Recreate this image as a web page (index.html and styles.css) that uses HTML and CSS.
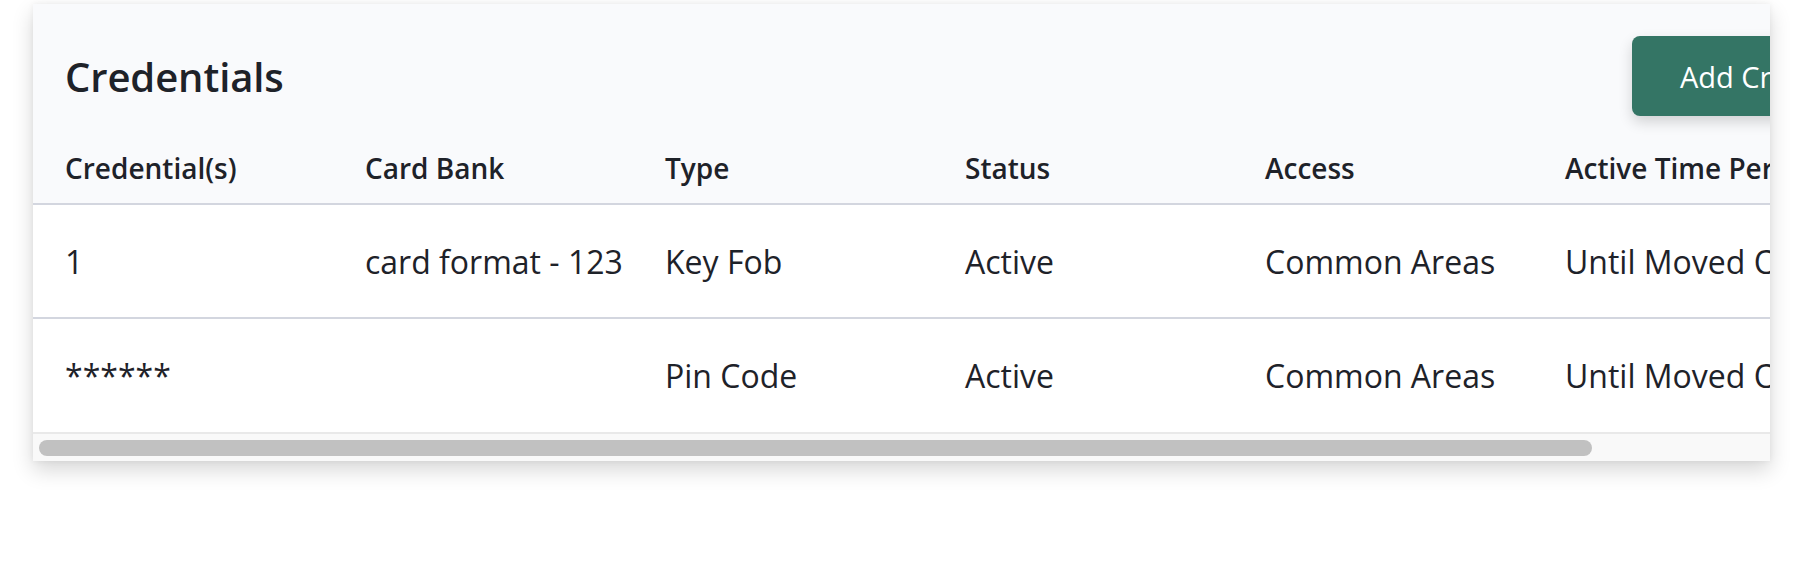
FILE: index.html
```html
<!DOCTYPE html>
<html lang="en">
<head>
<meta charset="utf-8">
<title>Credentials</title>
<link rel="stylesheet" href="styles.css">
</head>
<body>
<div class="card">
  <div class="viewport">
    <div class="content">
      <div class="top-bar">
        <h2 class="title">Credentials</h2>
        <button class="add-btn">Add Credential</button>
      </div>
      <table class="grid">
        <thead>
          <tr>
            <th>Credential(s)</th>
            <th>Card Bank</th>
            <th>Type</th>
            <th>Status</th>
            <th>Access</th>
            <th>Active Time Period</th>
          </tr>
        </thead>
        <tbody>
          <tr class="row-first">
            <td>1</td>
            <td>card format - 123</td>
            <td>Key Fob</td>
            <td>Active</td>
            <td>Common Areas</td>
            <td>Until Moved Out</td>
          </tr>
          <tr>
            <td>******</td>
            <td></td>
            <td>Pin Code</td>
            <td>Active</td>
            <td>Common Areas</td>
            <td>Until Moved Out</td>
          </tr>
        </tbody>
      </table>
    </div>
  </div>
  <div class="hscroll">
    <div class="hscroll-thumb"></div>
  </div>
</div>
</body>
</html>
```
FILE: styles.css
```css
* { box-sizing: border-box; }

html, body {
  margin: 0;
  padding: 0;
  background: #ffffff;
}

body {
  min-height: 100vh;
  padding: 4px 0 60px 33px;
  font-family: "Open Sans", "Noto Sans", "Liberation Sans", sans-serif;
  color: #1e2229;
}

.card {
  width: 1737px;
  height: 457px;
  background: #ffffff;
  box-shadow: 0 9px 20px rgba(0, 0, 0, 0.16), 0 0 6px rgba(0, 0, 0, 0.06);
  overflow: hidden;
  display: flex;
  flex-direction: column;
}

.viewport {
  flex: 1;
  overflow: hidden;
}

.content {
  width: 1931px;
}

.top-bar {
  height: 130px;
  padding: 14px 32px 0 32px;
  display: flex;
  align-items: center;
  justify-content: space-between;
  background: #f9fafc;
}

.title {
  margin: 0;
  font-size: 40px;
  font-weight: 600;
  font-stretch: 92%;
  letter-spacing: -0.1px;
  color: #1e2229;
}

.add-btn {
  width: 300px;
  height: 80px;
  padding: 0 0 0 48px;
  border: 0;
  border-radius: 8px;
  background: #347565;
  color: #ffffff;
  text-align: left;
  font-family: "Open Sans", "Noto Sans", sans-serif;
  font-size: 29px;
  font-weight: 500;
  font-stretch: 92%;
  box-shadow: 0 6px 14px rgba(0, 0, 0, 0.16);
}

.grid {
  border-collapse: collapse;
  table-layout: fixed;
  width: 1931px;
}

.grid th,
.grid td {
  width: 300px;
  padding: 0 0 0 32px;
  text-align: left;
  vertical-align: middle;
  white-space: nowrap;
  font-stretch: 92%;
}

.grid th:last-child,
.grid td:last-child {
  width: 431px;
}

.grid thead tr {
  height: 70px;
  background: #f9fafc;
  border-bottom: 2px solid #d3d6df;
}

.grid th {
  font-size: 28px;
  font-weight: 600;
  padding-bottom: 2px;
  color: #1e2229;
}

.grid tbody tr {
  height: 114px;
}

.grid tbody tr.row-first {
  border-bottom: 2px solid #d3d6df;
}

.grid td {
  font-size: 32px;
  font-weight: 400;
  color: #1e2229;
}

.hscroll {
  height: 29px;
  flex: none;
  background: #f9f9f9;
  border-top: 2px solid #e9e9e9;
  padding: 6px 0 0 6px;
}

.hscroll-thumb {
  width: 1553px;
  height: 16px;
  border-radius: 8px;
  background: #c1c1c1;
}
```
